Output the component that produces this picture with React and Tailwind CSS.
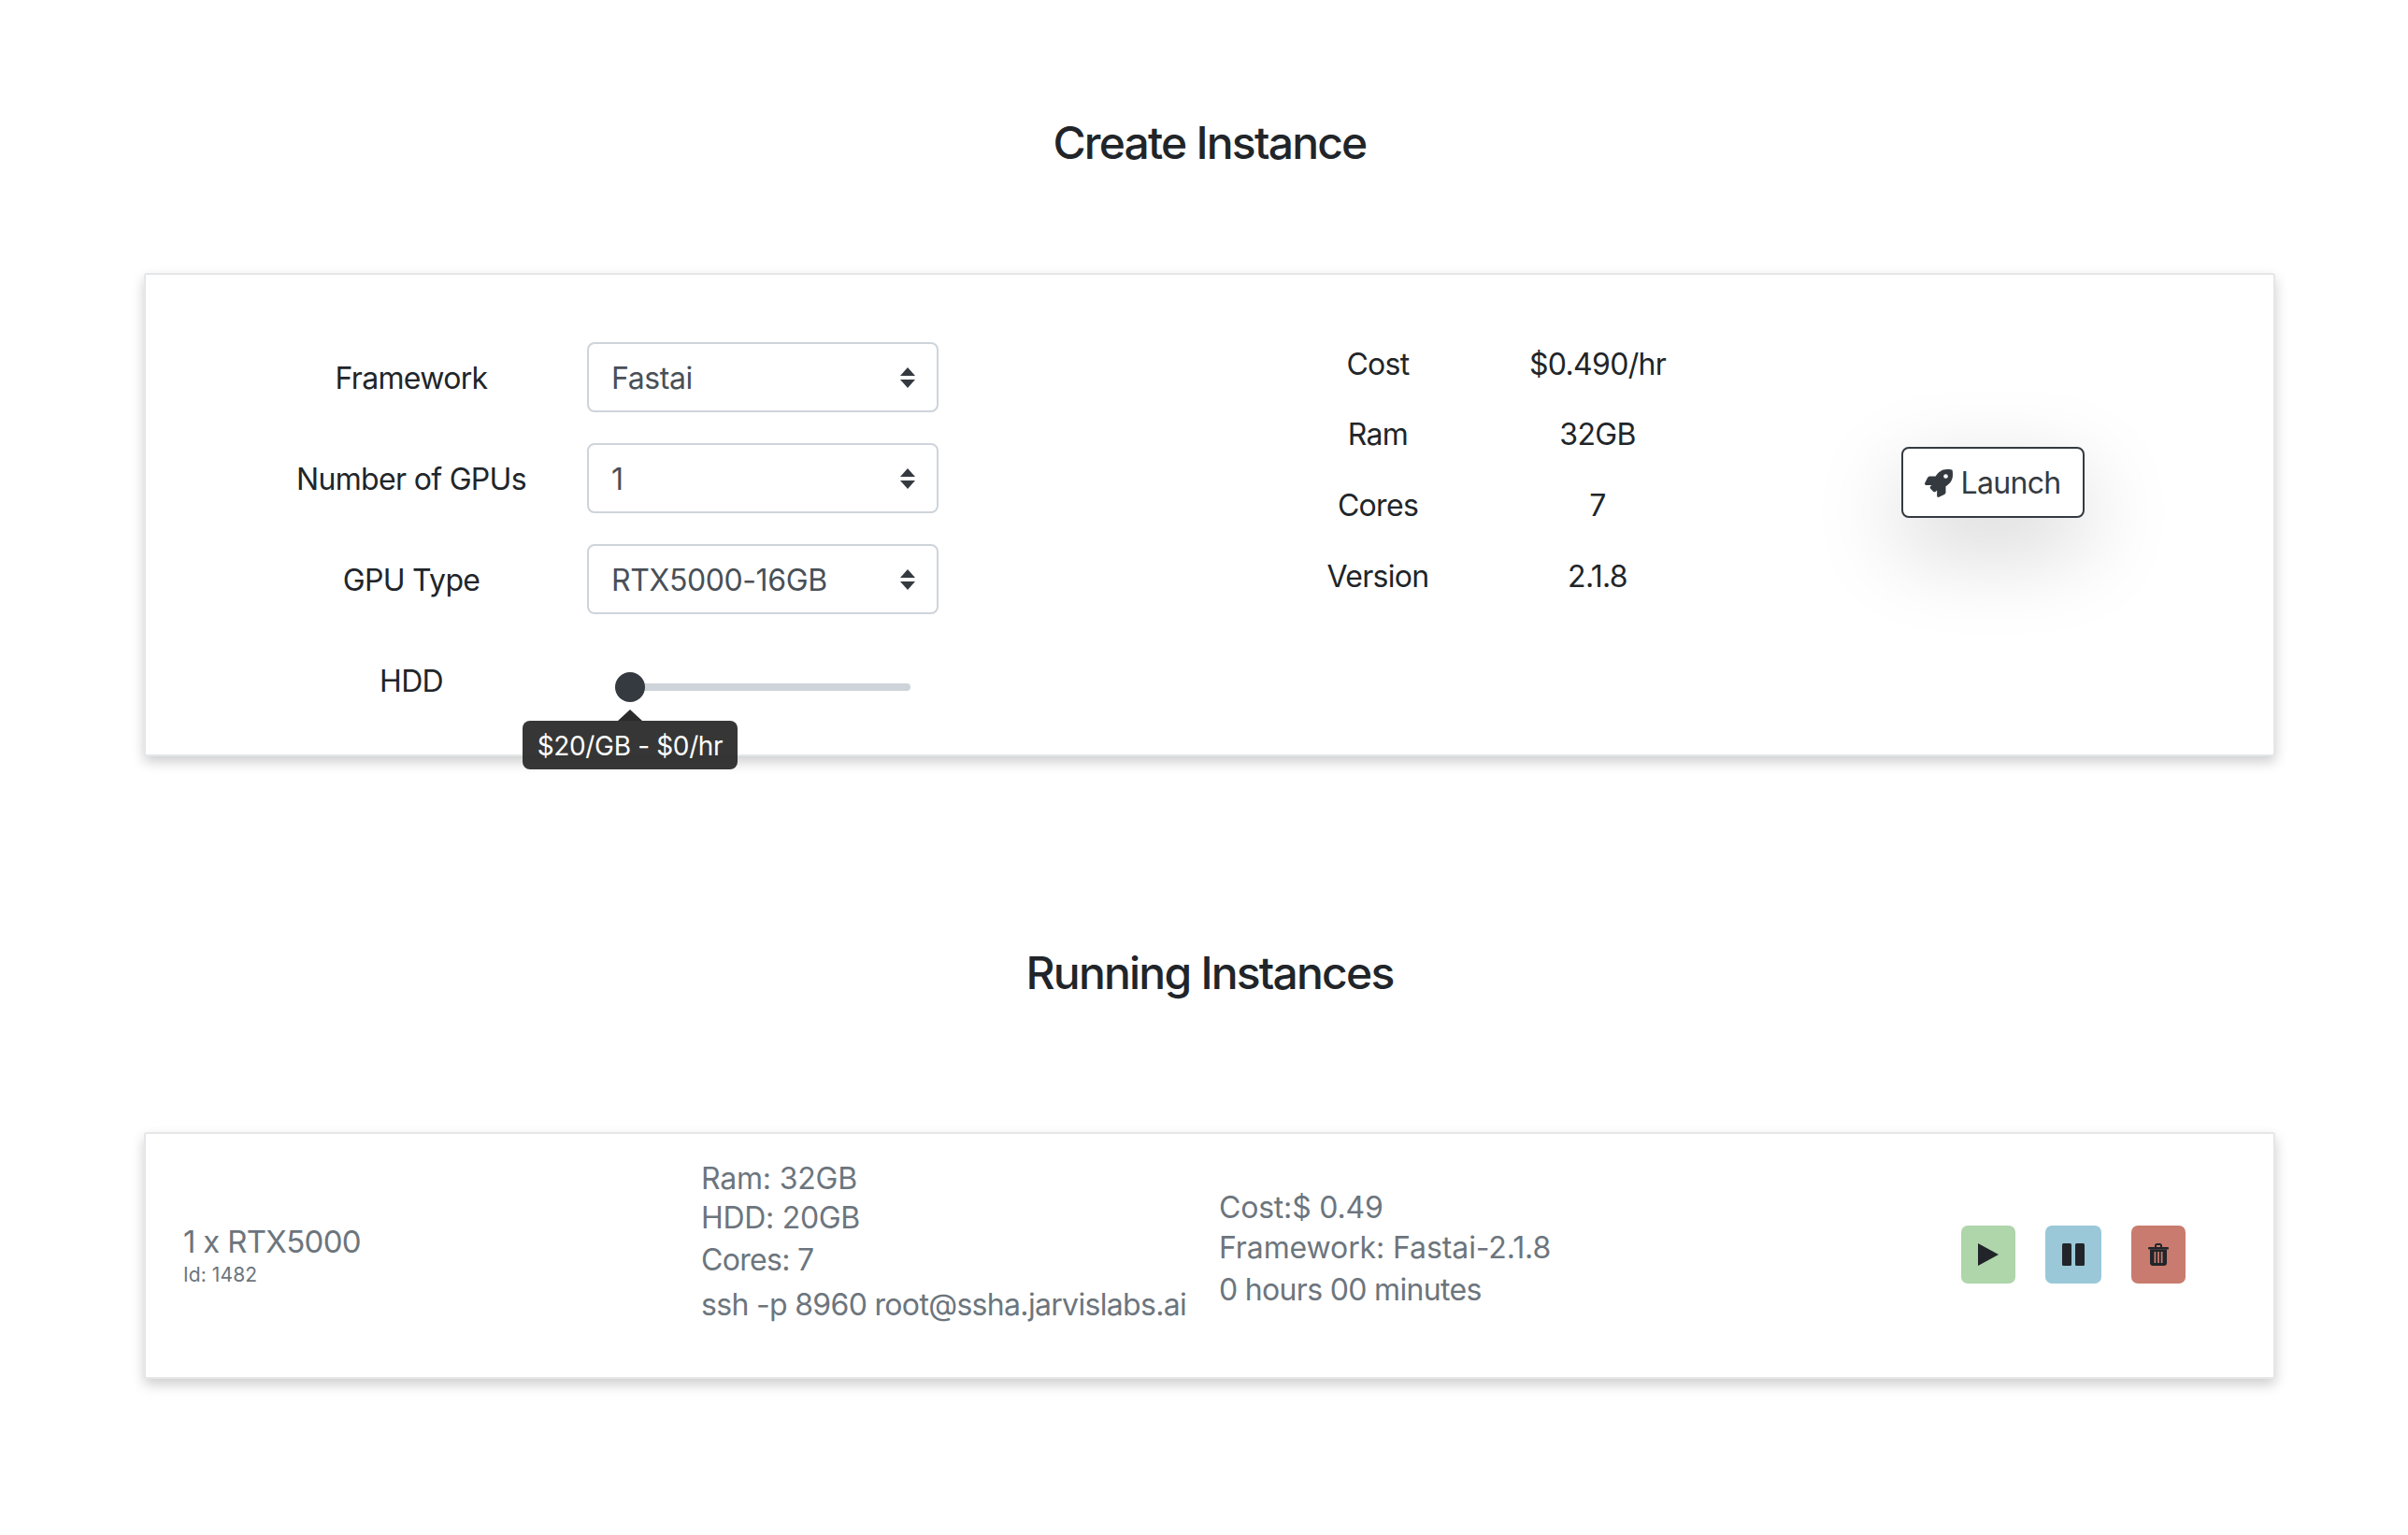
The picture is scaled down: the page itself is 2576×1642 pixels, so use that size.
import React from "react";
import { FaRocket } from "react-icons/fa";

const formRows = [
  { label: "Framework", value: "Fastai" },
  { label: "Number of GPUs", value: "1" },
  { label: "GPU Type", value: "RTX5000-16GB" },
];

const specs = [
  ["Cost", "$0.490/hr"],
  ["Ram", "32GB"],
  ["Cores", "7"],
  ["Version", "2.1.8"],
];

const cardClass =
  "ml-[154px] w-[2280px] bg-white border-2 border-[#e4e6e8] rounded-[3px] shadow-[0_6px_14px_rgba(0,0,0,0.2)]";

const SelectBox = ({ value }) => (
  <div className="relative w-[376px] h-[75px]">
    <select
      defaultValue={value}
      className="appearance-none w-full h-full pl-[24px] pr-[50px] pt-[3px] bg-white border-2 border-[#ced4da] rounded-[8px] text-[#495057] text-[32px] tracking-[-0.4px]"
    >
      <option value={value}>{value}</option>
    </select>
    <svg className="absolute right-[25px] top-[27px] w-[16px] h-[22px]" viewBox="0 0 16 22" fill="#343a40">
      <polygon points="8,0 16,9 0,9" />
      <polygon points="0,13 16,13 8,22" />
    </svg>
  </div>
);

const ActionButton = ({ color, width, children }) => (
  <button className={`flex items-center justify-center h-[62px] rounded-[7px] ${color} ${width}`}>
    {children}
  </button>
);

export default function App() {
  return (
    <div className="bg-white min-h-[1642px] text-[#212529] text-[32px] tracking-[-0.68px] font-['Inter',sans-serif]">
      <h2 className="ml-[154px] w-[2280px] pt-[113px] h-[192px] text-center text-[48px] leading-[80px] font-medium tracking-[-1.8px]">
        Create Instance
      </h2>

      {/* Create card */}
      <div className={`${cardClass} relative mt-[100px] h-[517px] flex items-start pt-[57px] pl-[154px]`}>
        <div className="pt-[15px] flex flex-col gap-[33px]">
          {formRows.map((row) => (
            <div key={row.label} className="flex items-center">
              <div className="w-[260px] mr-[58px] pt-[3px] text-center">{row.label}</div>
              <SelectBox value={row.value} />
            </div>
          ))}
          <div className="flex items-center h-[48px] mt-[15px]">
            <div className="w-[260px] mr-[58px] text-center">HDD</div>
            <div className="relative flex items-center w-[346px] h-[32px] mt-[12px]">
              <div className="w-full h-[8px] ml-[30px] bg-[#ced4da] rounded-full" />
              <div className="absolute left-[30px] w-[32px] h-[32px] rounded-full bg-[#343a40]" />
              <div className="absolute left-[-69px] top-[52px] w-[230px] h-[52px] pt-[1px] flex items-center justify-center rounded-[8px] bg-[#2b2b2b]/95 text-white text-[28px] tracking-[-0.35px]">
                $20/GB - $0/hr
                <span className="absolute left-[102px] top-[-12px] w-0 h-0 border-x-[13px] border-x-transparent border-b-[12px] border-b-[#2b2b2b]" />
              </div>
            </div>
          </div>
        </div>

        <div className="ml-[370px] mt-[1px] w-[470px] grid grid-cols-[200px_270px] auto-rows-[75.6px] items-center text-center">
          {specs.map(([name, val]) => (
            <React.Fragment key={name}>
              <div>{name}</div>
              <div>{val}</div>
            </React.Fragment>
          ))}
        </div>

        <button className="ml-[190px] mt-[127px] w-[196px] h-[76px] pt-[2px] flex items-center justify-center gap-[8px] bg-white border-2 border-[#343a40] rounded-[8px] text-[#343a40] shadow-[0_32px_96px_rgba(0,0,0,0.175)]">
          <FaRocket className="w-[30px] h-[30px]" />
          Launch
        </button>
      </div>

      <h2 className="ml-[154px] w-[2280px] mt-[192px] h-[80px] text-center text-[48px] leading-[80px] font-medium tracking-[-1.8px]">
        Running Instances
      </h2>

      {/* Running card */}
      <div className={`${cardClass} mt-[130px] h-[264px] flex items-center pl-[40px] text-[#6c757d]`}>
        <div className="w-[554px] mt-[-7px]">
          <div className="text-[33px] leading-[48px] tracking-[-0.7px]">1 x RTX5000</div>
          <div className="text-[21px] leading-[24px] tracking-[0.1px]">Id: 1482</div>
        </div>
        <div className="w-[554px] mt-[-27px]">
          <div className="leading-[42px] tracking-[-0.2px]">Ram: 32GB</div>
          <div className="leading-[42px] tracking-[-0.3px]">HDD: 20GB</div>
          <div className="leading-[48px]">Cores: 7</div>
          <div className="leading-[48px]">ssh -p 8960 root@ssha.jarvislabs.ai</div>
        </div>
        <div className="w-[794px] mt-[-12px]">
          <div className="leading-[42px] tracking-[-0.2px]">Cost:$ 0.49</div>
          <div className="leading-[44px] tracking-[-0.1px]">Framework: Fastai-2.1.8</div>
          <div className="leading-[46px]">0 hours 00 minutes</div>
        </div>
        <div className="flex gap-[32px] mt-[-3px]">
          <ActionButton color="bg-[#afd5aa]" width="w-[58px]">
            <svg className="w-[22px] h-[24px]" viewBox="0 0 22 24" fill="#212529">
              <polygon points="0,0 22,12 0,24" />
            </svg>
          </ActionButton>
          <ActionButton color="bg-[#9ac8d8]" width="w-[60px]">
            <svg className="w-[24px] h-[24px]" viewBox="0 0 24 24" fill="#212529">
              <rect x="0" y="0" width="10" height="24" rx="1.5" />
              <rect x="14" y="0" width="10" height="24" rx="1.5" />
            </svg>
          </ActionButton>
          <ActionButton color="bg-[#c87b6e]" width="w-[58px]">
            <svg className="w-[22px] h-[24px]" viewBox="0 0 22 24" fill="#212529">
              <path d="M7 4V2.5C7 1.1 8.1 0 9.5 0h3C13.900 0 15 1.100 15 2.500V4h-2V2h-4v2H7z" />
              <rect x="0" y="4" width="22" height="2.500" rx="1" />
              <path fillRule="evenodd" d="M2 6.500h18V21c0 1.700-1.300 3-3 3H5c-1.700 0-3-1.300-3-3V6.500zM6.500 9v12h1.800V9H6.500zm3.600 0v12h1.800V9h-1.800zm3.600 0v12h1.800V9h-1.800z" />
            </svg>
          </ActionButton>
        </div>
      </div>
    </div>
  );
}
